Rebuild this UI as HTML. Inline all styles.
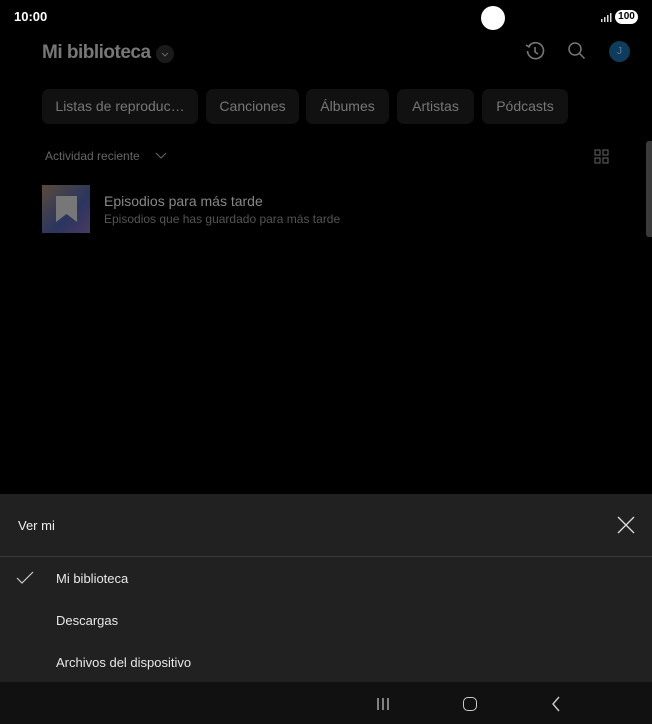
<!DOCTYPE html>
<html><head><meta charset="utf-8"><style>
*{margin:0;padding:0;box-sizing:border-box}
body{width:652px;height:724px;background:#000;font-family:"Liberation Sans",sans-serif;position:relative;overflow:hidden;color:#fff}
.a{position:absolute}
.chip{position:absolute;top:89px;height:35px;background:#111;border-radius:7px;color:#777;font-size:14px;line-height:35px;text-align:center}
.it{position:absolute;left:56px;font-size:13px;color:#e8e8e8}
</style></head><body>
<div class="a" style="left:14px;top:9px;font-size:13px;font-weight:bold">10:00</div>
<div class="a" style="left:481px;top:6px;width:24px;height:24px;border-radius:50%;background:#fff"></div>
<svg class="a" style="left:600px;top:12px" width="12" height="10"><rect x="1" y="7" width="1.5" height="3" fill="#ddd"/><rect x="4" y="5" width="1.5" height="5" fill="#ddd"/><rect x="7" y="3" width="1.5" height="7" fill="#ddd"/><rect x="10" y="1" width="1.5" height="9" fill="#ddd"/></svg>
<div class="a" style="left:615px;top:10px;width:23px;height:14px;border-radius:7px;background:#fff;color:#000;font-size:10px;font-weight:bold;text-align:center;line-height:14px">100</div>
<div class="a" style="left:42px;top:42px;font-size:19px;font-weight:bold;color:#777;letter-spacing:-0.5px">Mi biblioteca</div>
<div class="a" style="left:156px;top:45px;width:18px;height:18px;border-radius:50%;background:#1a1a1a"></div>
<svg class="a" style="left:160px;top:50px" width="10" height="8"><path d="M2 3l3 3 3-3" stroke="#666" fill="none"/></svg>
<svg class="a" style="left:524px;top:40px" width="22" height="22"><path d="M5 6A8 8 0 1 1 3.5 11" stroke="#777" stroke-width="1.6" fill="none"/><path d="M2 5l3 2 2-3" stroke="#777" stroke-width="1.4" fill="none"/><path d="M11 7v5l3 2" stroke="#777" stroke-width="1.6" fill="none"/></svg>
<svg class="a" style="left:567px;top:41px" width="20" height="20"><circle cx="8" cy="8" r="6" stroke="#777" stroke-width="1.5" fill="none"/><path d="M12.5 12.5l5 5" stroke="#777" stroke-width="1.5"/></svg>
<div class="a" style="left:609px;top:41px;width:21px;height:21px;border-radius:50%;background:#0f3c5c;color:#5a7fa0;font-size:10px;text-align:center;line-height:21px">J</div>
<div class="chip" style="left:42px;width:156px">Listas de reproduc…</div>
<div class="chip" style="left:206px;width:93px">Canciones</div>
<div class="chip" style="left:306px;width:83px">Álbumes</div>
<div class="chip" style="left:397px;width:77px">Artistas</div>
<div class="chip" style="left:482px;width:86px">Pódcasts</div>
<div class="a" style="left:45px;top:149px;font-size:12px;color:#666">Actividad reciente</div>
<svg class="a" style="left:155px;top:150px" width="12" height="10"><path d="M1 3l5 5 5-5" stroke="#666" fill="none"/></svg>
<svg class="a" style="left:594px;top:149px" width="15" height="15"><g stroke="#666" fill="none"><rect x="1" y="1" width="5" height="5"/><rect x="9" y="1" width="5" height="5"/><rect x="1" y="9" width="5" height="5"/><rect x="9" y="9" width="5" height="5"/></g></svg>
<div class="a" style="left:646px;top:141px;width:6px;height:96px;background:#3a3a3a;border-radius:3px 0 0 3px"></div>
<div class="a" style="left:42px;top:185px;width:48px;height:48px;background:linear-gradient(135deg,#5a4a3a,#2a3560 60%,#4a3a60)"></div>
<svg class="a" style="left:56px;top:196px" width="21" height="26"><path d="M0 0h21v26l-10.5-8L0 26z" fill="#777"/></svg>
<div class="a" style="left:104px;top:193px;font-size:14px;color:#888">Episodios para más tarde</div>
<div class="a" style="left:104px;top:212px;font-size:12px;color:#555">Episodios que has guardado para más tarde</div>
<div class="a" style="left:0;top:494px;width:652px;height:188px;background:#212121"></div>
<div class="a" style="left:18px;top:518px;font-size:13px;color:#eee">Ver mi</div>
<svg class="a" style="left:617px;top:516px" width="18" height="18"><path d="M1 1l16 16M17 1L1 17" stroke="#ddd" stroke-width="1.3"/></svg>
<div class="a" style="left:0;top:556px;width:652px;height:1px;background:#3a3a3a"></div>
<svg class="a" style="left:16px;top:571px" width="18" height="14"><path d="M1 7l5 5L17 1" stroke="#ccc" stroke-width="1.2" fill="none"/></svg>
<div class="it" style="top:571px">Mi biblioteca</div>
<div class="it" style="top:613px">Descargas</div>
<div class="it" style="top:655px">Archivos del dispositivo</div>
<div class="a" style="left:0;top:682px;width:652px;height:42px;background:#111"></div>
<svg class="a" style="left:376px;top:697px" width="14" height="14"><path d="M2 1v12M7 1v12M12 1v12" stroke="#ccc" stroke-width="1.2"/></svg>
<div class="a" style="left:463px;top:697px;width:14px;height:14px;border:1.4px solid #ccc;border-radius:5px"></div>
<svg class="a" style="left:550px;top:696px" width="12" height="16"><path d="M9 1L3 8l6 7" stroke="#ccc" stroke-width="1.4" fill="none"/></svg>
</body></html>
